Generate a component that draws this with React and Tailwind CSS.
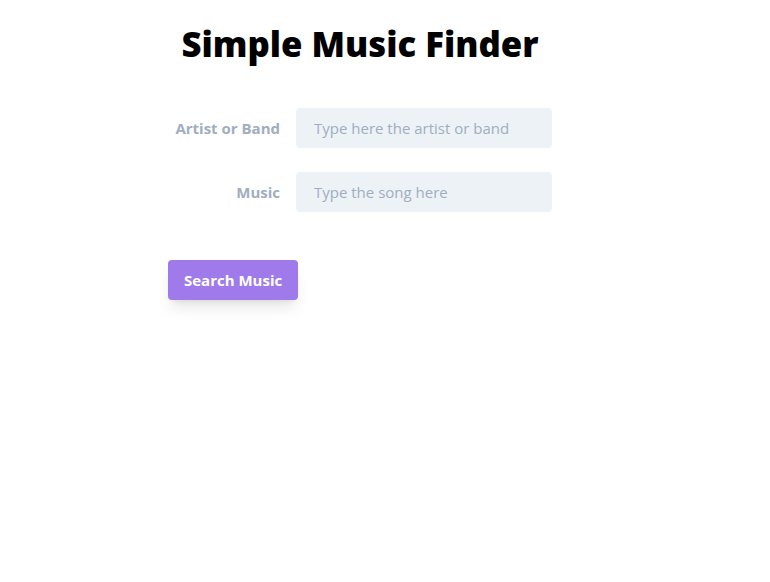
import React, { useState } from 'react';

const App = () => {
  const [artist, setArtist] = useState('');
  const [song, setSong] = useState('');

  return (
    <div className="min-h-screen bg-white" style={{ fontFamily: '"Open Sans", "Noto Sans", sans-serif' }}>
      <div className="w-[720px] flex flex-col items-center">
        <h1 className="mt-[20px] text-[34.7px] leading-[48px] font-extrabold text-black">Simple Music Finder</h1>
        <form className="w-full max-w-sm mt-[40px]" onSubmit={e => e.preventDefault()}>
          <div className="flex items-center mb-6">
            <div className="w-1/3">
              <label htmlFor="artist" className="block text-[#a0aec0] text-[15px] leading-6 font-bold text-right pr-4">
                Artist or Band
              </label>
            </div>
            <div className="w-2/3">
              <input
                id="artist"
                type="text"
                value={artist}
                onChange={e => setArtist(e.target.value)}
                placeholder="Type here the artist or band"
                className="appearance-none bg-[#edf2f7] border-2 border-[#edf2f7] rounded w-full py-2 px-4 text-[#4a5568] text-[15px] leading-[20px] placeholder-[#a0aec0] focus:outline-none"
              />
            </div>
          </div>
          <div className="flex items-center mb-6">
            <div className="w-1/3">
              <label htmlFor="song" className="block text-[#a0aec0] text-[15px] leading-6 font-bold text-right pr-4">
                Music
              </label>
            </div>
            <div className="w-2/3">
              <input
                id="song"
                type="text"
                value={song}
                onChange={e => setSong(e.target.value)}
                placeholder="Type the song here"
                className="appearance-none bg-[#edf2f7] border-2 border-[#edf2f7] rounded w-full py-2 px-4 text-[#4a5568] text-[15px] leading-[20px] placeholder-[#a0aec0] focus:outline-none"
              />
            </div>
          </div>
          <div className="mt-12">
            <button
              type="submit"
              className="shadow-lg bg-[#9f7aea] text-white text-[15px] leading-6 font-bold py-2 px-4 rounded"
            >
              Search Music
            </button>
          </div>
        </form>
      </div>
    </div>
  );
};

export default App;
